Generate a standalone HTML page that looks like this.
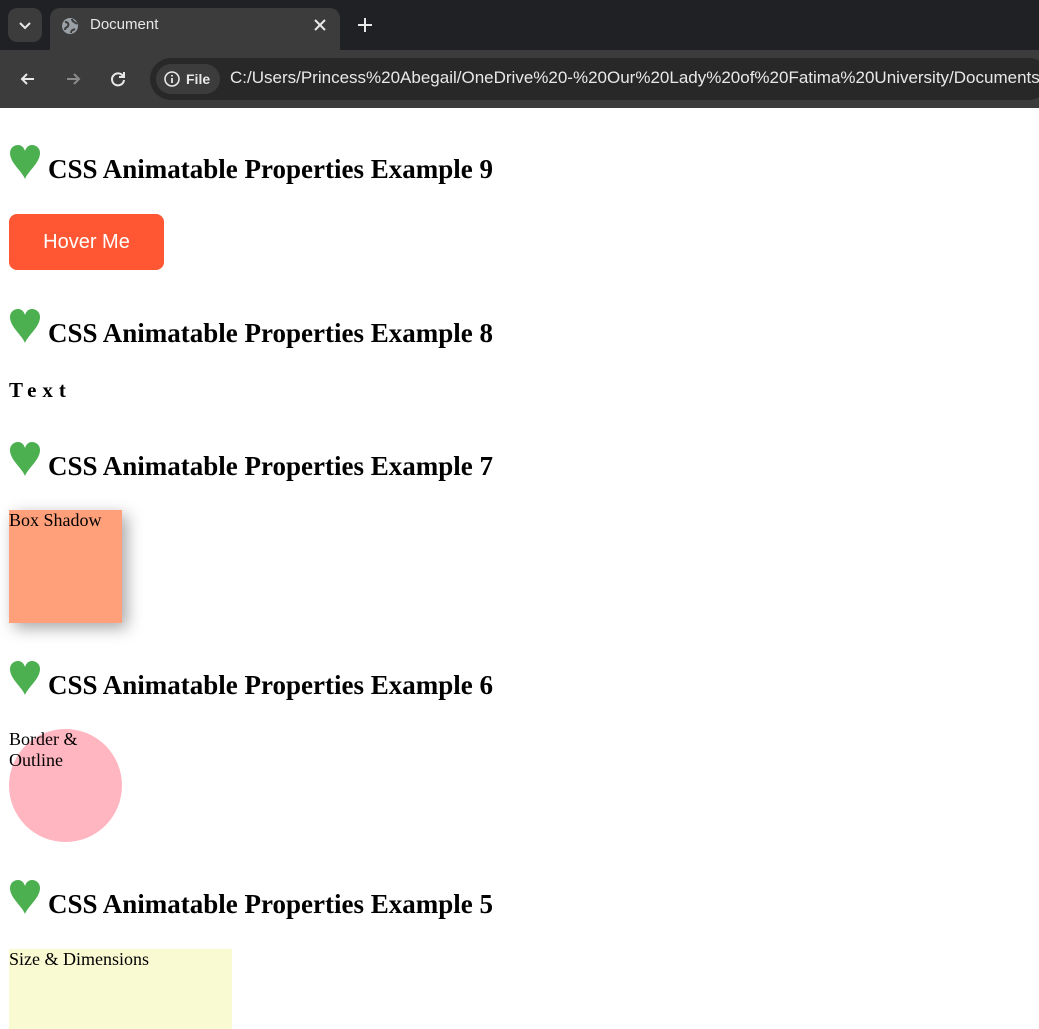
<!DOCTYPE html>
<html><head><meta charset="utf-8"><style>
*{margin:0;padding:0;box-sizing:border-box}
body{width:1039px;height:1017px;overflow:hidden;background:#fff;position:relative;font-family:"Liberation Serif",serif}
.top{position:absolute;left:0;top:0;width:1039px;height:50px;background:#202124}
.bar{position:absolute;left:0;top:50px;width:1039px;height:58px;background:#3c3c3c}
.tab{position:absolute;left:50px;top:8px;width:290px;height:44px;background:#3c3c3c;border-radius:10px 10px 0 0}
.chev{position:absolute;left:8px;top:8px;width:34px;height:34px;border-radius:9px;background:#3c3c3c}
.omni{position:absolute;left:150px;top:58px;width:900px;height:42px;border-radius:21px;background:#282828}
.file{position:absolute;left:156px;top:64px;width:64px;height:30px;border-radius:15px;background:#3c3c3c;color:#e8e8e8;font:bold 14px "Liberation Sans",sans-serif;line-height:30px;padding-left:30px}
.url{position:absolute;left:230px;top:68px;color:#e8e8e8;font:17px "Liberation Sans",sans-serif;white-space:nowrap}
.ttl{position:absolute;left:90px;top:16px;color:#e8e8e8;font:15px "Liberation Sans",sans-serif}
h2{position:absolute;left:48px;font:bold 27px "Liberation Serif",serif;white-space:nowrap}
.heart{position:absolute;left:10px}
.btn{position:absolute;left:9px;top:214px;width:155px;height:56px;background:#ff5733;border-radius:8px;color:#fff;font:20px "Liberation Sans",sans-serif;text-align:center;line-height:56px}
.t{font-size:18px;line-height:21px}
</style></head><body>
<div class="top"></div>
<div class="chev"><svg width="34" height="34"><path d="M12 15l5 5 5-5" stroke="#e8e8e8" stroke-width="2" fill="none"/></svg></div>
<div class="tab"></div>
<svg style="position:absolute;left:60px;top:16px" width="20" height="20"><circle cx="10" cy="10" r="8" fill="#9aa0a6"/><path d="M5 6c3 0 4 2 3 4s-3 1-3 4M12 3c0 3 3 3 5 5M11 17c0-3 2-3 4-4" stroke="#3c3c3c" stroke-width="2" fill="none"/></svg>
<div class="ttl">Document</div>
<svg style="position:absolute;left:312px;top:17px" width="16" height="16"><path d="M3 3l10 10M13 3L3 13" stroke="#e8e8e8" stroke-width="2"/></svg>
<svg style="position:absolute;left:356px;top:16px" width="18" height="18"><path d="M9 2v14M2 9h14" stroke="#e8e8e8" stroke-width="2"/></svg>
<div class="bar"></div>
<svg style="position:absolute;left:18px;top:69px" width="20" height="20"><path d="M16 10H4M9 5l-5 5 5 5" stroke="#e8e8e8" stroke-width="2" fill="none"/></svg>
<svg style="position:absolute;left:63px;top:69px" width="20" height="20"><path d="M4 10h12M11 5l5 5-5 5" stroke="#8a8a8a" stroke-width="2" fill="none"/></svg>
<svg style="position:absolute;left:108px;top:69px" width="20" height="20"><path d="M15 7a6 6 0 1 0 1 4" stroke="#e8e8e8" stroke-width="2" fill="none"/><path d="M16 3v5h-5" stroke="#e8e8e8" stroke-width="2" fill="none"/></svg>
<div class="omni"></div>
<div class="file">File</div>
<svg style="position:absolute;left:163px;top:70px" width="18" height="18"><circle cx="9" cy="9" r="7" stroke="#e8e8e8" stroke-width="1.6" fill="none"/><path d="M9 8v5M9 5v1.5" stroke="#e8e8e8" stroke-width="1.8"/></svg>
<div class="url">C:/Users/Princess%20Abegail/OneDrive%20-%20Our%20Lady%20of%20Fatima%20University/Documents/</div>

<svg class="heart" style="top:145px" width="30" height="34" viewBox="0 0 30 34"><path d="M15 34C12 26 0 18 0 8 0 3 4 0 8 0c4 0 6 3 7 6 1-3 3-6 7-6 4 0 8 3 8 8 0 10-12 18-15 26z" fill="#4caf50"/></svg>
<h2 style="top:154px">CSS Animatable Properties Example 9</h2>
<div class="btn">Hover Me</div>

<svg class="heart" style="top:309px" width="30" height="34" viewBox="0 0 30 34"><path d="M15 34C12 26 0 18 0 8 0 3 4 0 8 0c4 0 6 3 7 6 1-3 3-6 7-6 4 0 8 3 8 8 0 10-12 18-15 26z" fill="#4caf50"/></svg>
<h2 style="top:318px">CSS Animatable Properties Example 8</h2>
<div style="position:absolute;left:9px;top:378px;font:bold 21px 'Liberation Serif',serif;letter-spacing:6px">Text</div>

<svg class="heart" style="top:442px" width="30" height="34" viewBox="0 0 30 34"><path d="M15 34C12 26 0 18 0 8 0 3 4 0 8 0c4 0 6 3 7 6 1-3 3-6 7-6 4 0 8 3 8 8 0 10-12 18-15 26z" fill="#4caf50"/></svg>
<h2 style="top:451px">CSS Animatable Properties Example 7</h2>
<div class="t" style="position:absolute;left:9px;top:510px;width:113px;height:113px;background:#ffa07a;box-shadow:5px 5px 15px rgba(0,0,0,.35)">Box Shadow</div>

<svg class="heart" style="top:661px" width="30" height="34" viewBox="0 0 30 34"><path d="M15 34C12 26 0 18 0 8 0 3 4 0 8 0c4 0 6 3 7 6 1-3 3-6 7-6 4 0 8 3 8 8 0 10-12 18-15 26z" fill="#4caf50"/></svg>
<h2 style="top:670px">CSS Animatable Properties Example 6</h2>
<div style="position:absolute;left:9px;top:729px;width:113px;height:113px;background:#ffb6c1;border-radius:50%"></div>
<div class="t" style="position:absolute;left:9px;top:729px;width:80px">Border &amp; Outline</div>

<svg class="heart" style="top:880px" width="30" height="34" viewBox="0 0 30 34"><path d="M15 34C12 26 0 18 0 8 0 3 4 0 8 0c4 0 6 3 7 6 1-3 3-6 7-6 4 0 8 3 8 8 0 10-12 18-15 26z" fill="#4caf50"/></svg>
<h2 style="top:889px">CSS Animatable Properties Example 5</h2>
<div class="t" style="position:absolute;left:9px;top:949px;width:223px;height:80px;background:#fafad2">Size &amp; Dimensions</div>
</body></html>
